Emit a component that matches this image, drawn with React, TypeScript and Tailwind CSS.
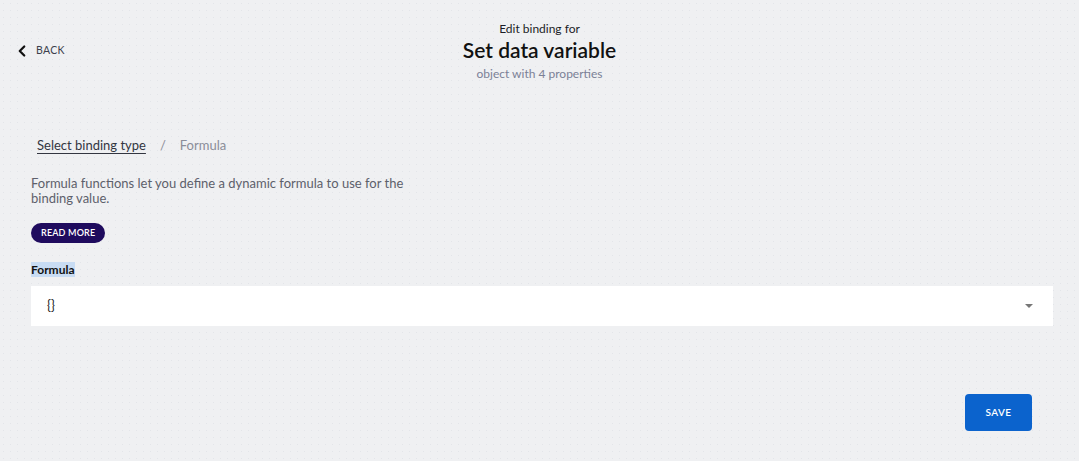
import { ChevronLeft } from "lucide-react";

export default function App() {
  return (
    <div
      className="flex h-[461px] w-full flex-col bg-[#eff0f2] bg-[radial-gradient(#e3e5e9_0.8px,transparent_0.8px)] bg-[length:7px_7px] text-[#1b1d26]"
      style={{ fontFamily: "Lato, 'Noto Sans', sans-serif" }}
    >
      {/* header */}
      <header className="relative flex h-[100px] flex-col items-center pt-[21px]">
        <button className="absolute left-[13px] top-[42px] flex items-center gap-[5px] text-[10.5px] tracking-[0.03em] text-[#3c3f4c]">
          <ChevronLeft className="h-[18px] w-[18px] text-[#111]" strokeWidth={3} />
          <span>BACK</span>
        </button>
        <div className="text-[12px] leading-[16px]">Edit binding for</div>
        <h1 className="text-[21px] font-semibold leading-[26px] text-[#111]">Set data variable</h1>
        <div className="mt-[3px] text-[12px] leading-[16px] text-[#7b8196]">object with 4 properties</div>
      </header>

      <main className="flex flex-col pl-[31px] pr-[26px] pt-[36px]">
        <nav className="flex items-center gap-[14px] pl-[6px] text-[13px] leading-[18px]">
          <a className="text-[#333641] underline underline-offset-[3px]">Select binding type</a>
          <span className="text-[#8a8d98]">/</span>
          <span className="text-[#8a8d98]">Formula</span>
        </nav>

        <p className="mt-[22px] max-w-[410px] text-[13px] leading-[15px] text-[#5d606b]">
          Formula functions let you define a dynamic formula to use for the binding value.
        </p>

        <div className="mt-[17px] flex">
          <button className="h-[20px] rounded-full bg-[#1f0b5e] px-[10px] text-[9px] font-semibold tracking-[0.02em] text-white">
            READ MORE
          </button>
        </div>

        <label className="mt-[19px] flex text-[12px] font-bold leading-[15px]">
          <span className="bg-[#c8dcf3] text-[#111]">Formula</span>
        </label>

        <div className="mt-[9px] flex h-[40px] items-center justify-between bg-white pl-[16px] pr-[20px]">
          <span className="text-[13px] text-[#222]">{"{}"}</span>
          <span className="h-0 w-0 border-x-[4px] border-t-[4px] border-x-transparent border-t-[#777]" />
        </div>

        <div className="mt-[68px] flex justify-end pr-[21px]">
          <button className="h-[37px] w-[67px] rounded-[4px] bg-[#0b63cd] text-[10px] font-semibold tracking-[0.04em] text-white">
            SAVE
          </button>
        </div>
      </main>
    </div>
  );
}
